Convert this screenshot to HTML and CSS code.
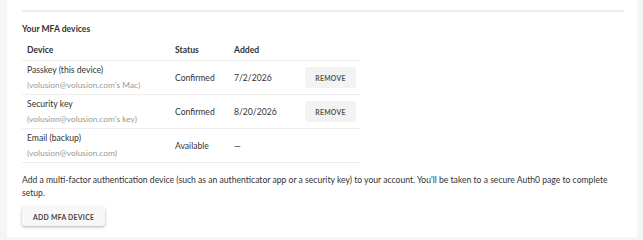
FILE: index.html
```html
<!DOCTYPE html>
<html lang="en">
<head>
  <meta charset="UTF-8" />
  <title>MFA devices</title>
  <link rel="stylesheet" href="styles.css">
</head>
<body>

<div class="page">
  <div class="card">
    <hr class="divider" />

    <h3 class="section-title">Your MFA devices</h3>

    <table class="devices">
      <thead>
        <tr>
          <th class="col-device">Device</th>
          <th class="col-status">Status</th>
          <th class="col-added">Added</th>
          <th class="col-action"></th>
        </tr>
      </thead>
      <tbody>
        <tr>
          <td>
            <div class="device-name">Passkey (this device)</div>
            <div class="device-owner">(volusion@volusion.com's Mac)</div>
          </td>
          <td>Confirmed</td>
          <td>7/2/2026</td>
          <td><button class="btn-remove">Remove</button></td>
        </tr>
        <tr>
          <td>
            <div class="device-name">Security key</div>
            <div class="device-owner">(volusion@volusion.com's key)</div>
          </td>
          <td>Confirmed</td>
          <td>8/20/2026</td>
          <td><button class="btn-remove">Remove</button></td>
        </tr>
        <tr>
          <td>
            <div class="device-name">Email (backup)</div>
            <div class="device-owner">(volusion@volusion.com)</div>
          </td>
          <td>Available</td>
          <td>&mdash;</td>
          <td></td>
        </tr>
      </tbody>
    </table>

    <p class="hint">Add a multi-factor authentication device (such as an authenticator app or a security key) to your account. You'll be taken to a secure Auth0 page to complete setup.</p>

    <button class="btn-add">Add MFA device</button>
  </div>
</div>

</body>
</html>
```

FILE: styles.css
```css
body {
  margin: 0;
  background: #f5f5f5;
  color: #333;
  font-family: 'Lato', 'Liberation Sans', sans-serif;
}

.page {
  display: flex;
  height: 240px;
  padding-left: 7px;
}

.card {
  width: 602px;
  height: 237px;
  background: #fff;
  padding: 0 13px 0 15px;
}

.divider {
  border: none;
  border-top: 2px solid #eeeeee;
  margin: 10px 0 0 0;
}

.section-title {
  font-size: 8.6px;
  font-weight: 700;
  color: #333;
  margin: 11px 0 0 0;
  line-height: 13px;
}

.devices {
  border-collapse: collapse;
  margin-top: 3px;
  font-size: 8.6px;
}

.devices th {
  text-align: left;
  font-weight: 700;
  font-size: 8.6px;
  color: #333;
  height: 21px;
  padding: 0 5px;
  border-bottom: 1px solid #eeeeee;
}

.devices td {
  height: 33px;
  padding: 0 5px;
  border-bottom: 1px solid #eeeeee;
  color: #333;
}

.col-device { width: 138px; }
.col-status { width: 49px; }
.col-added { width: 61px; }
.col-action { width: 51px; }

.device-name {
  line-height: 15px;
}

.device-owner {
  color: #999;
  font-size: 8.4px;
  line-height: 14px;
}

.btn-remove {
  background: #f3f3f3;
  border: none;
  border-radius: 3px;
  color: #555;
  font-family: inherit;
  font-size: 6.8px;
  font-weight: 700;
  letter-spacing: 0.3px;
  text-transform: uppercase;
  width: 51px;
  height: 21px;
  padding: 0;
  cursor: pointer;
}

.hint {
  font-size: 8.6px;
  line-height: 13px;
  color: #333;
  margin: 11px 0 0 0;
}

.btn-add {
  background: #f7f7f7;
  border: none;
  border-radius: 3px;
  box-shadow: 0 1px 3px rgba(0, 0, 0, 0.3);
  color: #444;
  font-family: inherit;
  font-size: 6.8px;
  font-weight: 700;
  letter-spacing: 0.3px;
  text-transform: uppercase;
  height: 19px;
  padding: 0 11px;
  margin-top: 7px;
  cursor: pointer;
}
```
